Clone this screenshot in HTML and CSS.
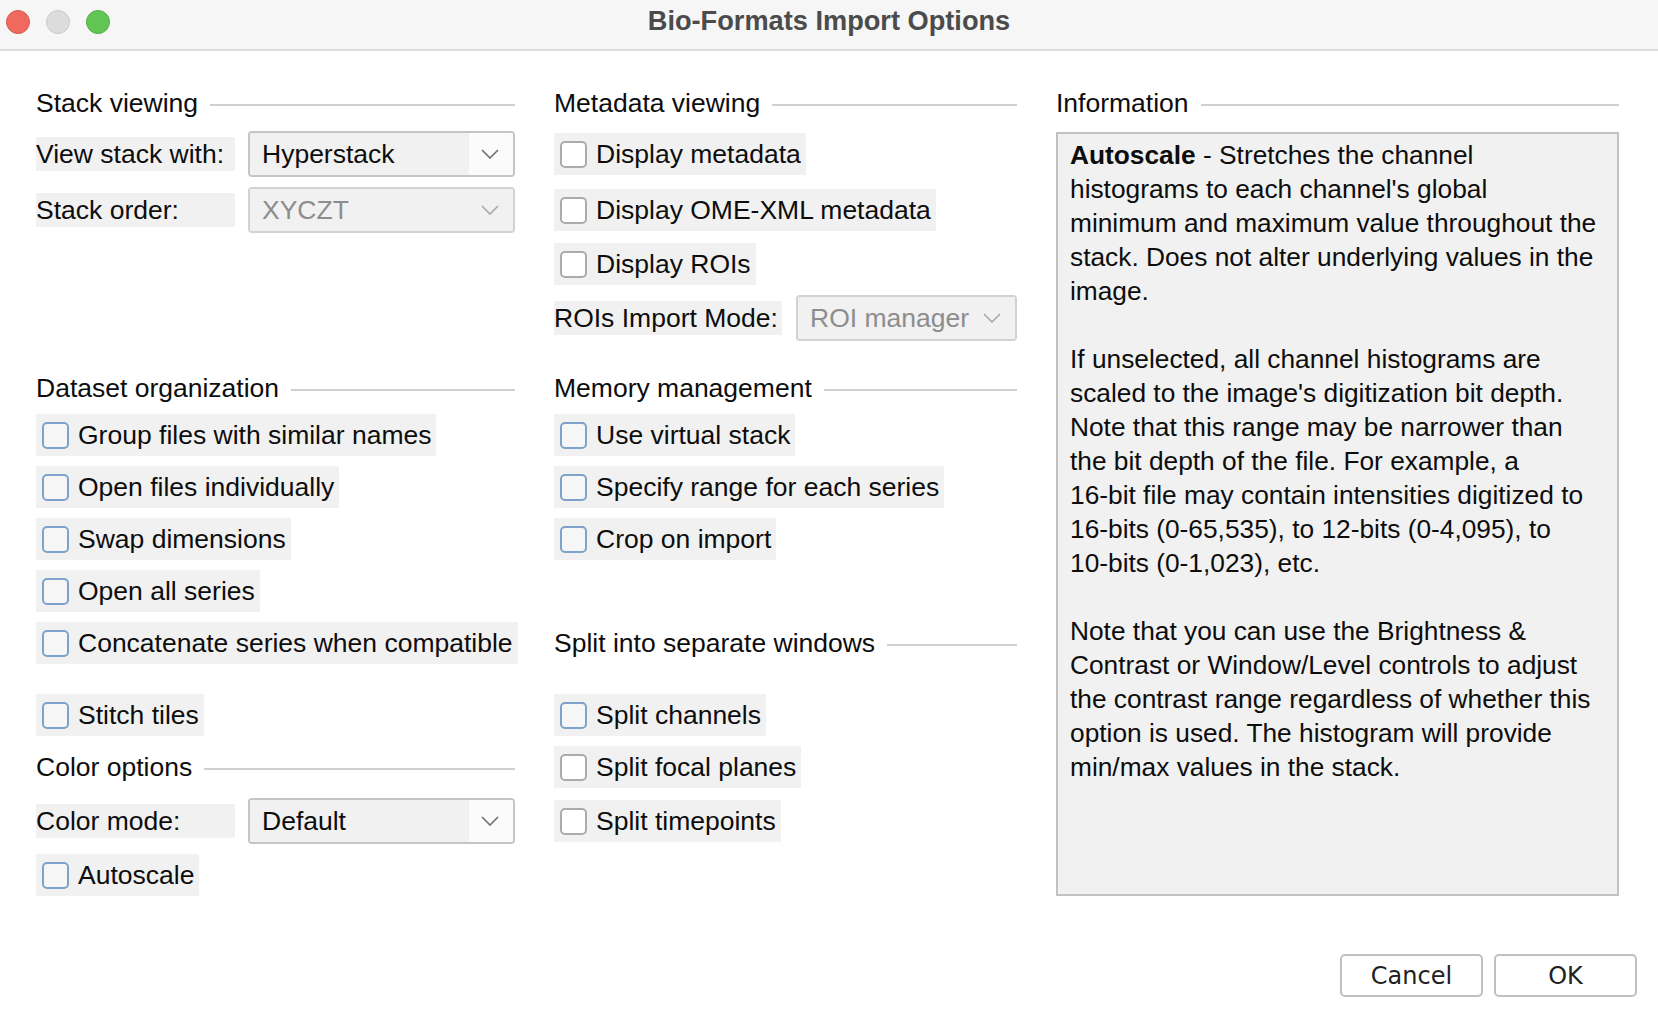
FILE: index.html
```html
<!DOCTYPE html>
<html lang="en">
<head>
<meta charset="utf-8">
<title>Bio-Formats Import Options</title>
<link rel="stylesheet" href="styles.css">
</head>
<body>
<div class="window">
  <div class="titlebar">
    <div class="lights">
      <span class="light red"></span>
      <span class="light gray"></span>
      <span class="light green"></span>
    </div>
    <div class="title">Bio-Formats Import Options</div>
  </div>

  <div class="content">
    <div class="grid">
      <!-- row 1 -->
      <div class="hdr top"><span>Stack viewing</span><i class="rule"></i></div>
      <div class="hdr top"><span>Metadata viewing</span><i class="rule"></i></div>
      <div class="hdr top"><span>Information</span><i class="rule"></i></div>

      <div class="info">
        <p><b>Autoscale</b> - Stretches the channel<br>histograms to each channel's global<br>minimum and maximum value throughout the<br>stack. Does not alter underlying values in the<br>image.<br><br>If unselected, all channel histograms are<br>scaled to the image's digitization bit depth.<br>Note that this range may be narrower than<br>the bit depth of the file. For example, a<br>16-bit file may contain intensities digitized to<br>16-bits (0-65,535), to 12-bits (0-4,095), to<br>10-bits (0-1,023), etc.<br><br>Note that you can use the Brightness &amp;<br>Contrast or Window/Level controls to adjust<br>the contrast range regardless of whether this<br>option is used. The histogram will provide<br>min/max values in the stack.</p>
      </div>

      <!-- row 2 -->
      <div class="field">
        <span class="lbl">View stack with:</span>
        <div class="combo">
          <span class="val">Hyperstack</span>
          <span class="arrow"><svg width="18" height="10" viewBox="0 0 18 10"><polyline points="1,1 9,9 17,1" fill="none" stroke="#6e6e6e" stroke-width="1.6"/></svg></span>
        </div>
      </div>
      <div class="cb gray"><span class="box"></span><span>Display metadata</span></div>

      <!-- row 3 -->
      <div class="field">
        <span class="lbl">Stack order:</span>
        <div class="combo disabled">
          <span class="val">XYCZT</span>
          <span class="arrow"><svg width="18" height="10" viewBox="0 0 18 10"><polyline points="1,1 9,9 17,1" fill="none" stroke="#a8a8a8" stroke-width="1.6"/></svg></span>
        </div>
      </div>
      <div class="cb gray"><span class="box"></span><span>Display OME-XML metadata</span></div>

      <!-- row 4 -->
      <div class="empty"></div>
      <div class="cb gray"><span class="box"></span><span>Display ROIs</span></div>

      <!-- row 5 -->
      <div class="empty"></div>
      <div class="field">
        <span class="lbl wide">ROIs Import Mode:</span>
        <div class="combo disabled">
          <span class="val">ROI manager</span>
          <span class="arrow"><svg width="18" height="10" viewBox="0 0 18 10"><polyline points="1,1 9,9 17,1" fill="none" stroke="#a8a8a8" stroke-width="1.6"/></svg></span>
        </div>
      </div>

      <!-- row 6 -->
      <div class="hdr section"><span>Dataset organization</span><i class="rule"></i></div>
      <div class="hdr section"><span>Memory management</span><i class="rule"></i></div>

      <!-- row 7 -->
      <div class="cb blue"><span class="box"></span><span>Group files with similar names</span></div>
      <div class="cb blue"><span class="box"></span><span>Use virtual stack</span></div>

      <!-- row 8 -->
      <div class="cb blue"><span class="box"></span><span>Open files individually</span></div>
      <div class="cb blue"><span class="box"></span><span>Specify range for each series</span></div>

      <!-- row 9 -->
      <div class="cb blue"><span class="box"></span><span>Swap dimensions</span></div>
      <div class="cb blue"><span class="box"></span><span>Crop on import</span></div>

      <!-- row 10 -->
      <div class="cb blue"><span class="box"></span><span>Open all series</span></div>
      <div class="empty"></div>

      <!-- row 11 -->
      <div class="cb blue"><span class="box"></span><span>Concatenate series when compatible</span></div>
      <div class="hdr"><span>Split into separate windows</span><i class="rule"></i></div>

      <!-- row 12 -->
      <div class="cb blue gap"><span class="box"></span><span>Stitch tiles</span></div>
      <div class="cb blue gap"><span class="box"></span><span>Split channels</span></div>

      <!-- row 13 -->
      <div class="hdr"><span>Color options</span><i class="rule"></i></div>
      <div class="cb gray"><span class="box"></span><span>Split focal planes</span></div>

      <!-- row 14 -->
      <div class="field">
        <span class="lbl">Color mode:</span>
        <div class="combo">
          <span class="val">Default</span>
          <span class="arrow"><svg width="18" height="10" viewBox="0 0 18 10"><polyline points="1,1 9,9 17,1" fill="none" stroke="#6e6e6e" stroke-width="1.6"/></svg></span>
        </div>
      </div>
      <div class="cb gray"><span class="box"></span><span>Split timepoints</span></div>

      <!-- row 15 -->
      <div class="cb blue"><span class="box"></span><span>Autoscale</span></div>
      <div class="empty"></div>
    </div>

    <div class="buttons">
      <button class="btn">Cancel</button>
      <button class="btn">OK</button>
    </div>
  </div>
</div>
</body>
</html>
```

FILE: styles.css
```css
html, body {
  margin: 0;
  padding: 0;
  background: #ffffff;
}

body {
  font-family: "Liberation Sans", Arial, Helvetica, sans-serif;
  color: #0d0d0d;
}

.window {
  width: 1658px;
  height: 1014px;
  background: #ffffff;
  overflow: hidden;
}

/* ---------- title bar ---------- */
.titlebar {
  height: 49px;
  background: #f6f6f6;
  border-bottom: 2px solid #dcdcdc;
  display: flex;
  align-items: center;
  justify-content: center;
  position: relative;
}

.lights {
  position: absolute;
  left: 6px;
  top: 10px;
  display: flex;
  gap: 16px;
}

.light {
  width: 24px;
  height: 24px;
  border-radius: 50%;
  box-sizing: border-box;
}

.light.red { background: #ee6a5f; border: 1px solid #d85a50; }
.light.gray { background: #dcdcdc; border: 1px solid #c9c9c9; }
.light.green { background: #62c655; border: 1px solid #52ad47; }

.title {
  font-weight: bold;
  font-size: 27.2px;
  color: #4b4b4b;
  margin-top: -7px;
}

/* ---------- content ---------- */
.content {
  padding: 36px 39px 0 36px;
}

.grid {
  display: grid;
  grid-template-columns: 479px 463px 563px;
  column-gap: 39px;
  row-gap: 10px;
  align-items: center;
  font-size: 26.5px;
}

.empty {
  height: 42px;
}

.hdr {
  height: 32px;
  display: flex;
  align-items: center;
  gap: 12px;
  white-space: nowrap;
}

.hdr.top {
  margin-bottom: 2px;
}

.hdr.section {
  margin-top: 21px;
}

.rule {
  flex: 1;
  height: 2px;
  background: #cfcfcf;
  margin-top: 3px;
}

/* checkbox rows */
.cb {
  justify-self: start;
  height: 42px;
  display: flex;
  align-items: center;
  gap: 9px;
  padding: 0 5px 0 6px;
  background: #f1f1f1;
  white-space: nowrap;
}

.cb.gap {
  margin-top: 20px;
}

.box {
  width: 27px;
  height: 27px;
  box-sizing: border-box;
  border-radius: 5px;
  flex: none;
}

.cb.gray .box {
  border: 2px solid #ababab;
  background: #ffffff;
}

.cb.blue .box {
  border: 2px solid #7ea2c9;
  background: #f6f6f6;
}

/* label + combo rows */
.field {
  display: flex;
  align-items: center;
  gap: 13px;
}

.lbl {
  width: 199px;
  height: 34px;
  line-height: 34px;
  background: #f1f1f1;
  white-space: nowrap;
  flex: none;
}

.lbl.wide {
  width: 228px;
  margin-right: 1px;
}

.combo {
  flex: 1;
  height: 46px;
  box-sizing: border-box;
  border: 2px solid #c5c5c5;
  border-radius: 4px;
  display: flex;
  overflow: hidden;
}

.combo .val {
  flex: 1;
  background: #f1f1f1;
  padding-left: 12px;
  line-height: 42px;
  white-space: nowrap;
}

.combo .arrow {
  width: 42px;
  background: #fbfbfb;
  display: flex;
  align-items: center;
  justify-content: center;
  padding-right: 2px;
}

.combo.disabled {
  border-color: #d2d2d2;
}

.combo.disabled .val {
  color: #8d8d8d;
}

.combo.disabled .arrow {
  background: #f1f1f1;
}

/* information panel */
.info {
  grid-column: 3;
  grid-row: 2 / 16;
  align-self: stretch;
  margin-top: 1px;
  background: #f1f1f1;
  border: 2px solid #c2c2c2;
  padding: 4px 12px;
}

.info p {
  margin: 0;
  font-size: 26.3px;
  line-height: 34px;
  white-space: nowrap;
}

.info b {
  font-weight: bold;
}

/* buttons */
.buttons {
  display: flex;
  justify-content: flex-end;
  gap: 11px;
  margin-top: 58px;
  margin-right: -18px;
}

.btn {
  width: 143px;
  height: 43px;
  box-sizing: border-box;
  border: 2px solid #c0c0c0;
  border-radius: 5px;
  background: #ffffff;
  font-family: "DejaVu Sans", "Liberation Sans", sans-serif;
  font-size: 24px;
  color: #222222;
  padding: 0;
}
```
